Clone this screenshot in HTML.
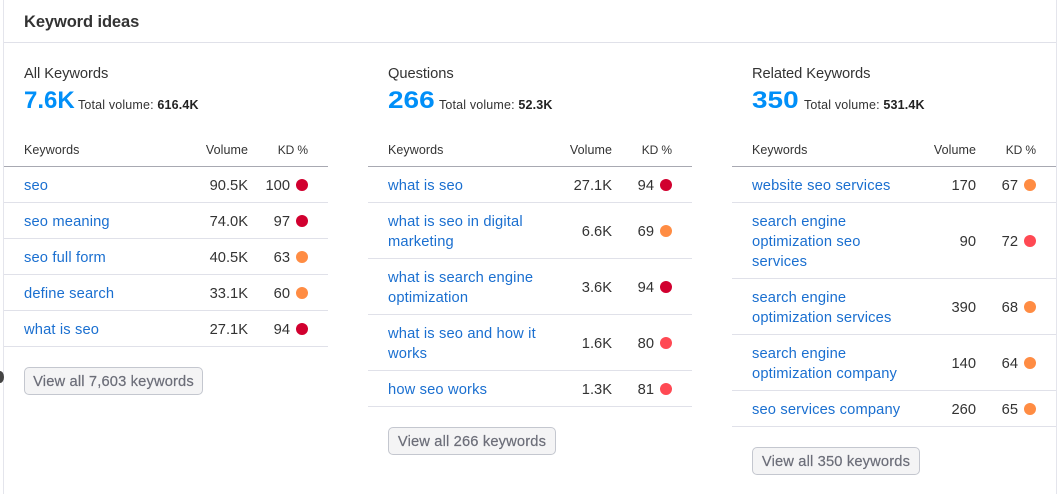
<!DOCTYPE html>
<html><head><meta charset="utf-8"><style>
html,body{margin:0;padding:0;background:#fff;width:1059px;height:494px;overflow:hidden}
body{font-family:"Liberation Sans",sans-serif;color:#333}
.wrap{position:absolute;left:0;top:0;width:1059px;height:494px;overflow:hidden}
.card{position:absolute;left:3px;top:-6px;width:1052px;height:520px;border:1px solid #e4e5ec;border-radius:6px;box-sizing:content-box}
.hl{position:absolute;left:4px;top:42px;width:1052px;height:1px;background:#e0e1e9}
.t{position:absolute;left:24px;top:12px;line-height:20px;font-size:16.5px;font-weight:700;letter-spacing:-.1px;white-space:nowrap}
.blob{position:absolute;left:-4px;top:371px;width:8px;height:12px;border-radius:50%;background:#444}
.col{position:absolute;top:0;width:324px}
.name{position:absolute;left:20px;top:64px;line-height:20px;font-size:14.7px;letter-spacing:-.05px;white-space:nowrap}
.big{position:absolute;left:20px;top:86px;line-height:30px;font-size:24.5px;font-weight:700;color:#008ff8;white-space:nowrap;transform-origin:left center;transform:scaleX(.98)}
.big.n{transform:scaleX(1.14)}
.tv{position:absolute;top:97px;line-height:16px;font-size:12.5px;letter-spacing:.16px;white-space:nowrap}
.tv b{color:#222}
.head{position:absolute;top:142px;left:0;width:324px;height:24px;border-bottom:1px solid #a8a9b2;font-size:12.5px;line-height:16px;letter-spacing:.07px}
.head span{position:absolute;top:0;white-space:nowrap}
.head .kd{font-size:12px;letter-spacing:-.1px}
.rows{position:absolute;top:167px;left:0;width:324px}
.r{position:relative;box-sizing:border-box;padding:8px 0 7px;border-bottom:1px solid #e0e1e9;line-height:20px;font-size:14.7px;height:36px}
.r.h2{height:56px}.r.h3{height:76px}
.k{display:block;position:relative;top:1px;margin-left:20px;width:160px;color:#1a6fd0;letter-spacing:.15px}
.v{position:absolute;right:80px;top:50%;margin-top:-9px;white-space:nowrap;color:#333}
.d{position:absolute;right:38px;top:50%;margin-top:-9px;white-space:nowrap;color:#333}
.c{position:absolute;left:292px;top:50%;margin-top:-6px;width:12px;height:12px;border-radius:50%}
.a{background:#d1002f}.o{background:#ff8c43}.l{background:#ff4953}
.btn{position:absolute;left:20px;box-sizing:border-box;height:28px;border:1px solid #c4c7cf;border-radius:5px;background:#f4f4f5;color:#6c6e79;font-size:14.7px;line-height:28px;text-align:center;letter-spacing:.15px;white-space:nowrap;-webkit-text-stroke:.2px #6c6e79}
</style></head><body>
<div class="wrap">
<div class="card"></div>
<div class="hl"></div>
<div class="blob"></div>
<div class="t">Keyword ideas</div>

<div class="col" style="left:4px">
<div class="name">All Keywords</div>
<div class="big">7.6K</div>
<div class="tv" style="left:74px">Total volume: <b>616.4K</b></div>
<div class="head"><span style="left:20px">Keywords</span><span style="right:80px">Volume</span><span class="kd" style="right:20px">KD %</span></div>
<div class="rows">
<div class="r"><span class="k">seo</span><span class="v">90.5K</span><span class="d">100</span><i class="c a"></i></div>
<div class="r"><span class="k">seo meaning</span><span class="v">74.0K</span><span class="d">97</span><i class="c a"></i></div>
<div class="r"><span class="k">seo full form</span><span class="v">40.5K</span><span class="d">63</span><i class="c o"></i></div>
<div class="r"><span class="k">define search</span><span class="v">33.1K</span><span class="d">60</span><i class="c o"></i></div>
<div class="r"><span class="k">what is seo</span><span class="v">27.1K</span><span class="d">94</span><i class="c a"></i></div>
</div>
<div class="btn" style="top:367px;width:179px">View all 7,603 keywords</div>
</div>

<div class="col" style="left:368px">
<div class="name">Questions</div>
<div class="big n">266</div>
<div class="tv" style="left:71px">Total volume: <b>52.3K</b></div>
<div class="head"><span style="left:20px">Keywords</span><span style="right:80px">Volume</span><span class="kd" style="right:20px">KD %</span></div>
<div class="rows">
<div class="r"><span class="k">what is seo</span><span class="v">27.1K</span><span class="d">94</span><i class="c a"></i></div>
<div class="r h2"><span class="k">what is seo in digital marketing</span><span class="v">6.6K</span><span class="d">69</span><i class="c o"></i></div>
<div class="r h2"><span class="k">what is search engine optimization</span><span class="v">3.6K</span><span class="d">94</span><i class="c a"></i></div>
<div class="r h2"><span class="k">what is seo and how it works</span><span class="v">1.6K</span><span class="d">80</span><i class="c l"></i></div>
<div class="r"><span class="k">how seo works</span><span class="v">1.3K</span><span class="d">81</span><i class="c l"></i></div>
</div>
<div class="btn" style="top:427px;width:168px">View all 266 keywords</div>
</div>

<div class="col" style="left:732px">
<div class="name">Related Keywords</div>
<div class="big n">350</div>
<div class="tv" style="left:72px">Total volume: <b>531.4K</b></div>
<div class="head"><span style="left:20px">Keywords</span><span style="right:80px">Volume</span><span class="kd" style="right:20px">KD %</span></div>
<div class="rows">
<div class="r"><span class="k">website seo services</span><span class="v">170</span><span class="d">67</span><i class="c o"></i></div>
<div class="r h3"><span class="k">search engine optimization seo services</span><span class="v">90</span><span class="d">72</span><i class="c l"></i></div>
<div class="r h2"><span class="k">search engine optimization services</span><span class="v">390</span><span class="d">68</span><i class="c o"></i></div>
<div class="r h2"><span class="k">search engine optimization company</span><span class="v">140</span><span class="d">64</span><i class="c o"></i></div>
<div class="r"><span class="k">seo services company</span><span class="v">260</span><span class="d">65</span><i class="c o"></i></div>
</div>
<div class="btn" style="top:447px;width:168px">View all 350 keywords</div>
</div>
</div>
</body></html>
